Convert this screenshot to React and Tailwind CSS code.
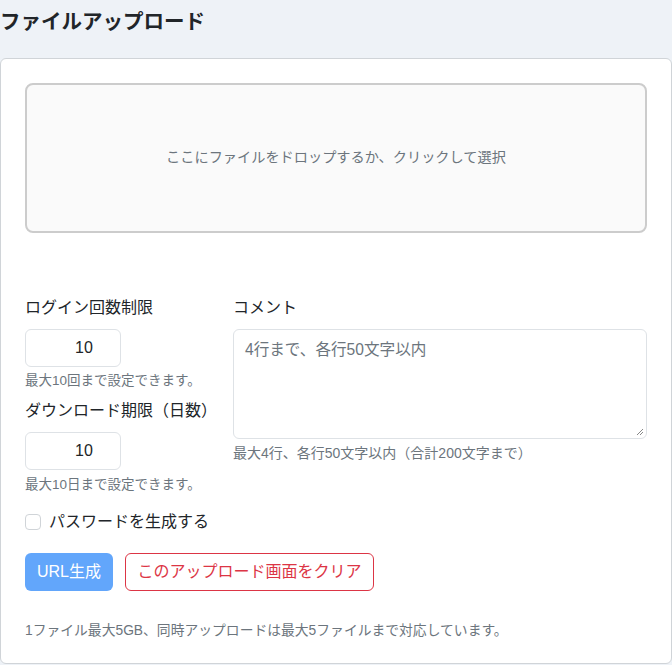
export default function App() {
  const font = { fontFamily: '"Liberation Sans", "Noto Sans CJK JP", sans-serif' };
  return (
    <div className="min-h-[665px] w-[672px] bg-[#eef2f7] text-[#212529]" style={font}>
      <h1 className="h-[58px] pt-[7px] text-[20.5px] font-bold leading-[30px] text-[#212529]">ファイルアップロード</h1>
      <div className="h-[606px] rounded-[6px] border border-[#d0d4d8] bg-white px-6 pt-6">
        <div className="flex h-[150px] items-center justify-center rounded-[8px] border-2 border-[#cccccc] bg-[#fafafa] text-[14.2px] text-[#6c757d]">
          ここにファイルをドロップするか、クリックして選択
        </div>
        <div className="mt-[63px] flex gap-[16px]">
          <div className="w-[192px] shrink-0">
            <div className="text-[16px] leading-[24px]">ログイン回数制限</div>
            <div className="mt-[9px] flex h-[38px] w-[96px] items-center justify-center rounded-[6px] border border-[#dee2e6] pl-[22px] text-[16px]">10</div>
            <div className="mt-[4px] text-[13.5px] leading-[20px] text-[#6c757d]">最大10回まで設定できます。</div>
            <div className="mt-[8px] text-[16px] leading-[24px]">ダウンロード期限（日数）</div>
            <div className="mt-[9px] flex h-[38px] w-[96px] items-center justify-center rounded-[6px] border border-[#dee2e6] pl-[22px] text-[16px]">10</div>
            <div className="mt-[5px] text-[13.5px] leading-[20px] text-[#6c757d]">最大10日まで設定できます。</div>
          </div>
          <div className="flex-1">
            <div className="text-[16px] leading-[24px]">コメント</div>
            <div className="relative mt-[9px] h-[110px] w-[414px] rounded-[6px] border border-[#dee2e6] px-[11px] pt-[8px] text-[15.6px] leading-[24px] text-[#6c757d]">
              4行まで、各行50文字以内
              <svg className="absolute bottom-[2px] right-[2px]" width="8" height="8" viewBox="0 0 8 8">
                <path d="M7 1 L1 7 M7 4 L4 7" stroke="#888" strokeWidth="1" />
              </svg>
            </div>
            <div className="mt-[4px] text-[14px] leading-[21px] text-[#6c757d]">最大4行、各行50文字以内（合計200文字まで）</div>
          </div>
        </div>
        <div className="mt-[15px] flex items-center gap-[8px]">
          <div className="h-[16px] w-[16px] rounded-[4px] border border-[#d0d4d8] bg-white" />
          <span className="text-[16px] leading-[24px]">パスワードを生成する</span>
        </div>
        <div className="mt-[19px] flex gap-[12px]">
          <button className="h-[38px] w-[88px] rounded-[6px] bg-[#62a6fb] text-[16px] text-white">URL生成</button>
          <button className="h-[38px] w-[249px] rounded-[6px] border border-[#dc3545] bg-white text-[16px] text-[#dc3545]">このアップロード画面をクリア</button>
        </div>
        <div className="mt-[29px] text-[13.8px] leading-[21px] text-[#6c757d]">1ファイル最大5GB、同時アップロードは最大5ファイルまで対応しています。</div>
      </div>
    </div>
  );
}
